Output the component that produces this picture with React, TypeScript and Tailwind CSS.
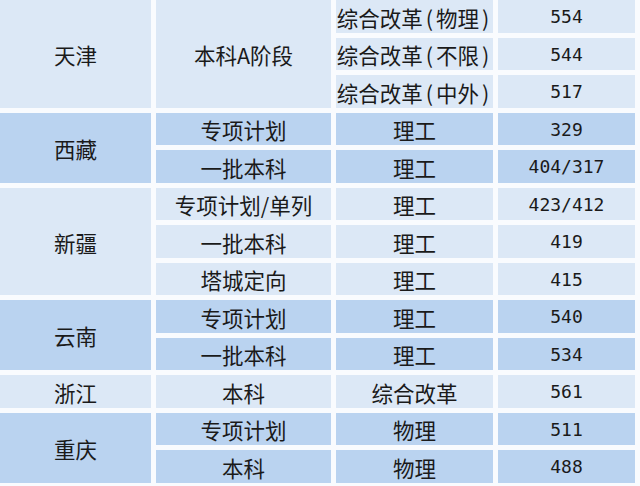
import React from "react";

type Row = { c2?: string; c2span?: number; c3: string; c4: string };
type Group = { prov: string; dark: boolean; rows: Row[] };

const groups: Group[] = [
  {
    prov: "天津",
    dark: false,
    rows: [
      { c2: "本科A阶段", c2span: 3, c3: "综合改革(物理)", c4: "554" },
      { c3: "综合改革(不限)", c4: "544" },
      { c3: "综合改革(中外)", c4: "517" },
    ],
  },
  {
    prov: "西藏",
    dark: true,
    rows: [
      { c2: "专项计划", c3: "理工", c4: "329" },
      { c2: "一批本科", c3: "理工", c4: "404/317" },
    ],
  },
  {
    prov: "新疆",
    dark: false,
    rows: [
      { c2: "专项计划/单列", c3: "理工", c4: "423/412" },
      { c2: "一批本科", c3: "理工", c4: "419" },
      { c2: "塔城定向", c3: "理工", c4: "415" },
    ],
  },
  {
    prov: "云南",
    dark: true,
    rows: [
      { c2: "专项计划", c3: "理工", c4: "540" },
      { c2: "一批本科", c3: "理工", c4: "534" },
    ],
  },
  {
    prov: "浙江",
    dark: false,
    rows: [{ c2: "本科", c3: "综合改革", c4: "561" }],
  },
  {
    prov: "重庆",
    dark: true,
    rows: [
      { c2: "专项计划", c3: "物理", c4: "511" },
      { c2: "本科", c3: "物理", c4: "488" },
    ],
  },
];

const cjk = "font-['Noto_Sans_CJK_SC',sans-serif] text-[21.5px] text-[#1a1a1a] pt-[2px]";
const mono = "font-['DejaVu_Sans_Mono',monospace] text-[18px] text-[#1a1a1a] pt-[2px]";

function Txt({ s }: { s: string }) {
  const m = s.match(/^(.*)\((.*)\)$/);
  if (!m) return <>{s}</>;
  return (
    <>
      {m[1]}
      <span className="px-[3px]">(</span>
      {m[2]}
      <span className="px-[3px]">)</span>
    </>
  );
}

export default function App() {
  const cells: React.ReactNode[] = [];
  groups.forEach((g, gi) => {
    const bg = g.dark ? "bg-[#bad3f0]" : "bg-[#dce8f6]";
    const span =
      g.rows.length === 3 ? "row-span-3" : g.rows.length === 2 ? "row-span-2" : "row-span-1";
    g.rows.forEach((r, ri) => {
      if (ri === 0) {
        cells.push(
          <div key={`p${gi}`} className={`${bg} ${span} flex items-center justify-center ${cjk}`}>
            {g.prov}
          </div>
        );
      }
      if (r.c2) {
        cells.push(
          <div
            key={`a${gi}-${ri}`}
            className={`${bg} ${r.c2span === 3 ? "row-span-3" : "row-span-1"} flex items-center justify-center ${cjk}`}
          >
            {r.c2}
          </div>
        );
      }
      cells.push(
        <div key={`b${gi}-${ri}`} className={`${bg} flex items-center justify-center whitespace-nowrap ${cjk}`}>
          <Txt s={r.c3} />
        </div>
      );
      cells.push(
        <div key={`c${gi}-${ri}`} className={`${bg} flex items-center justify-center ${mono}`}>
          {r.c4}
        </div>
      );
    });
  });

  return (
    <div className="w-[640px] h-[486px] bg-[#f9fbfe] overflow-hidden">
      <div className="grid grid-cols-[151px_175px_157px_137px] grid-rows-[repeat(13,32.5px)] gap-[5px] leading-none">
        {cells}
      </div>
    </div>
  );
}
